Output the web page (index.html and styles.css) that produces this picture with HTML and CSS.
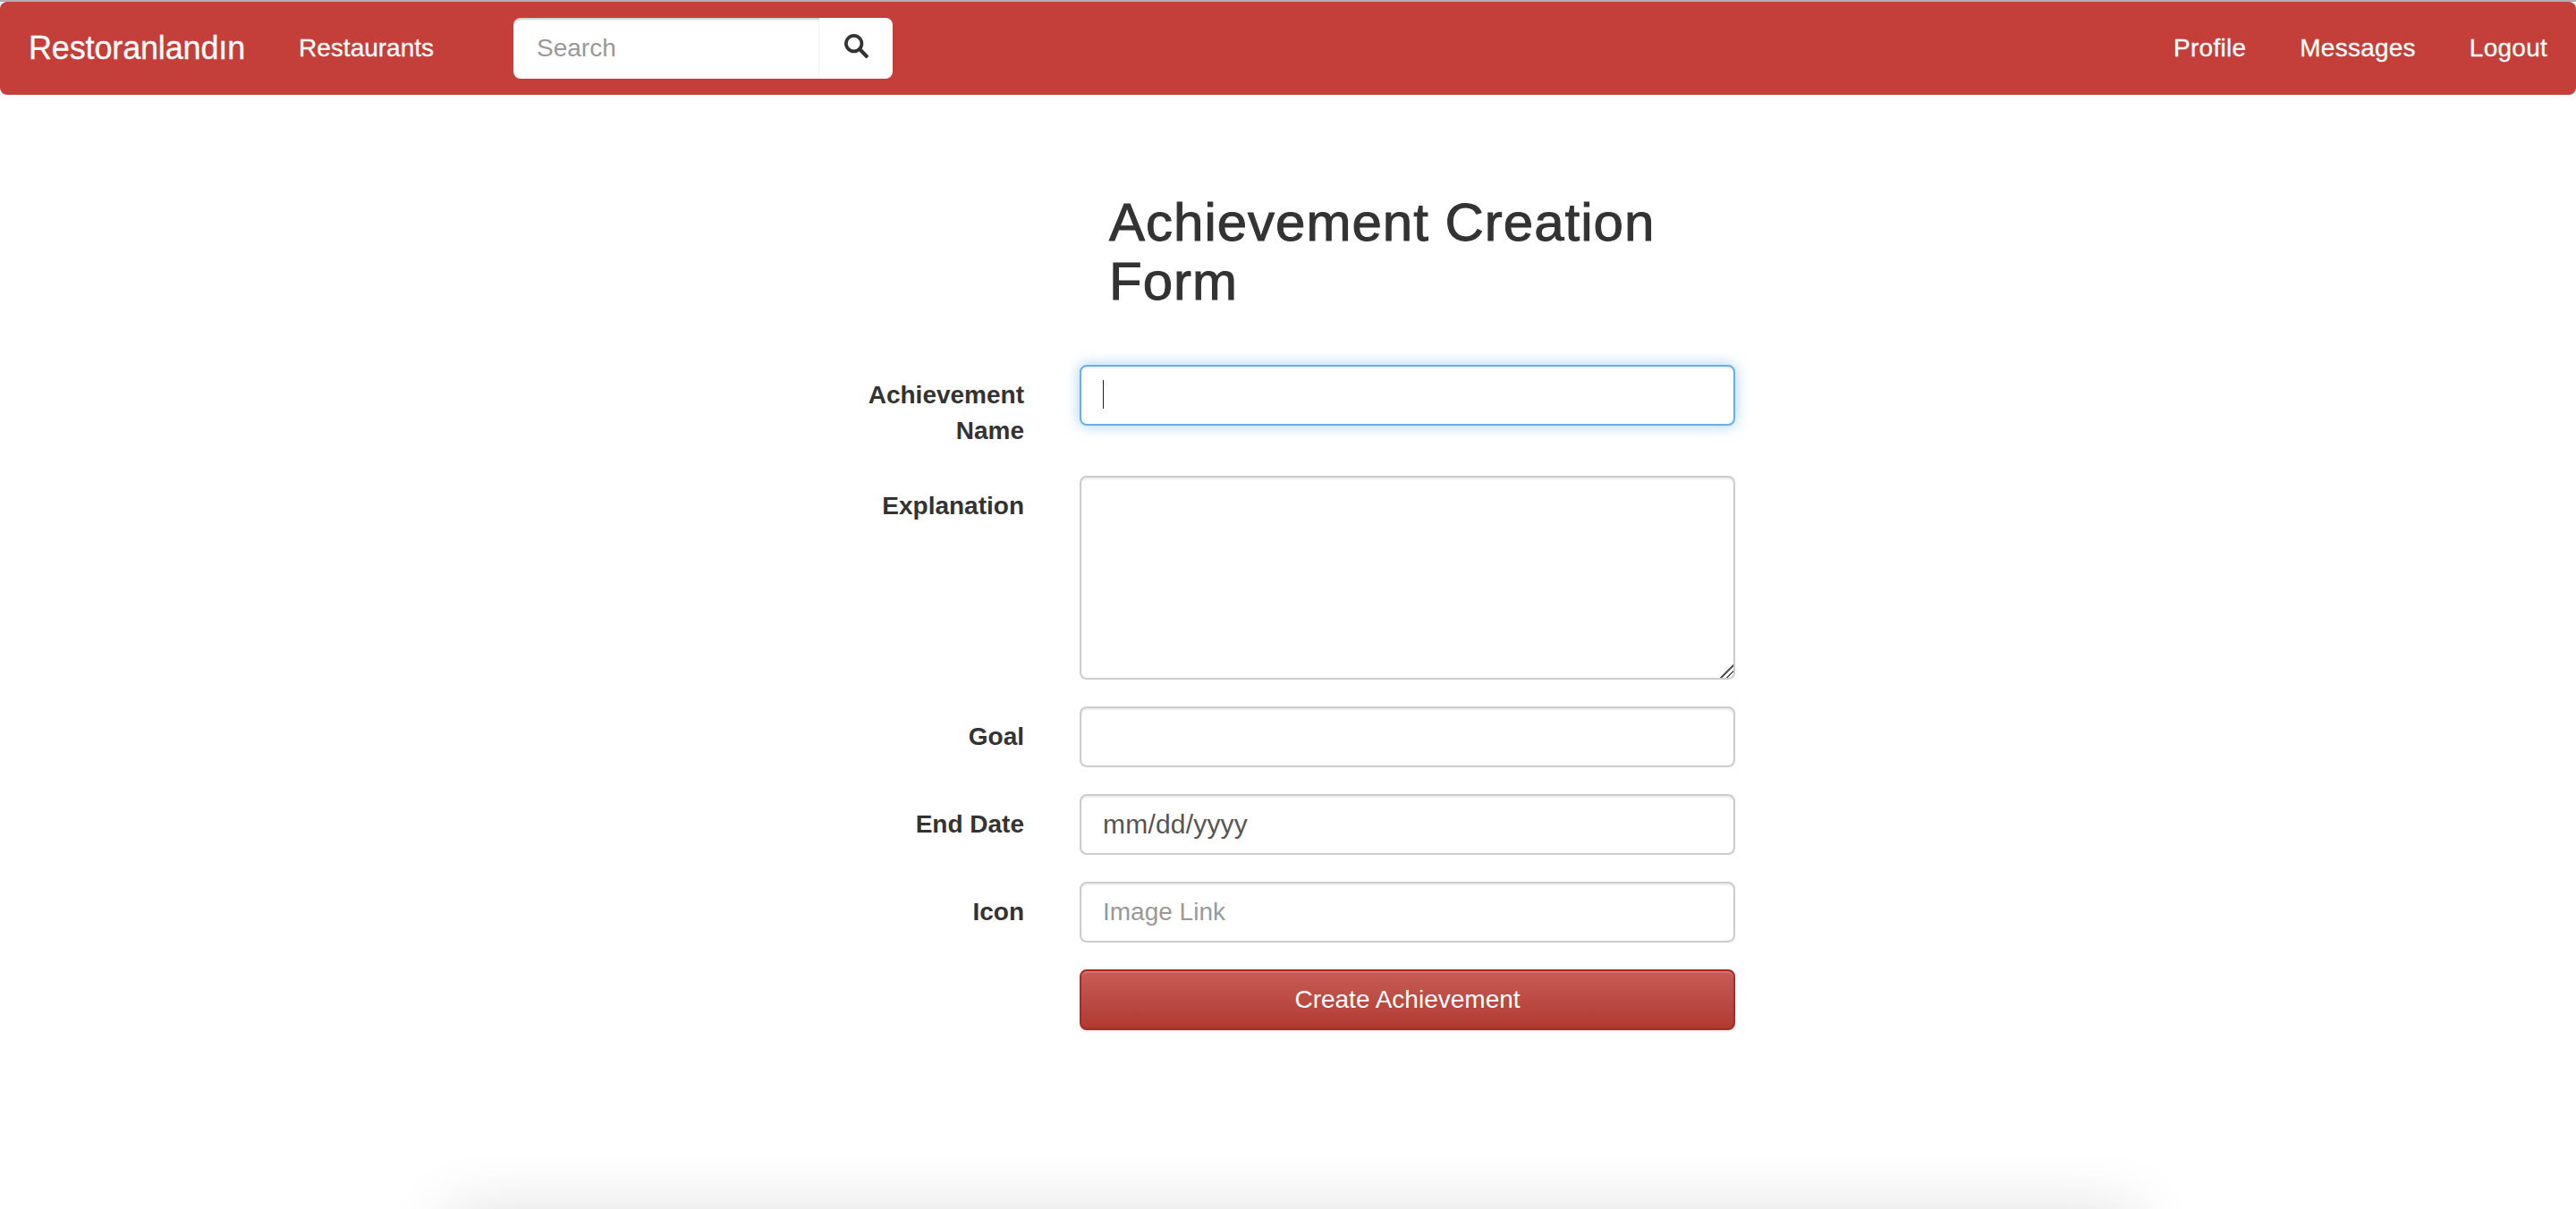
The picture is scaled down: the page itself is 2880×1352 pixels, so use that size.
FILE: index.html
```html
<!DOCTYPE html>
<html lang="en">
<head>
    <meta charset="UTF-8">
    <title>Restoranlandın</title>
    <link rel="stylesheet" href="styles.css">
</head>
<body>

    <nav class="navbar">
        <a class="brand" href="#">Restoranlandın</a>
        <a class="nav-link" href="#">Restaurants</a>
        <form class="search">
            <input type="text" placeholder="Search">
            <button type="button" aria-label="Search">
                <svg viewBox="0 0 24 24" width="28" height="28">
                    <circle cx="10" cy="10" r="7.5" fill="none" stroke="#333" stroke-width="3.2"/>
                    <path d="M15.5 15.5 L22 22" fill="none" stroke="#333" stroke-width="3.6" stroke-linecap="round"/>
                </svg>
            </button>
        </form>
        <div class="nav-right">
            <a class="nav-link" href="#">Profile</a>
            <a class="nav-link" href="#">Messages</a>
            <a class="nav-link" href="#">Logout</a>
        </div>
    </nav>

    <main class="content">
        <h2>Achievement Creation Form</h2>

        <form class="achievement-form">
            <label for="name">Achievement Name</label>
            <div class="field">
                <input class="control focused" type="text" id="name">
                <span class="caret"></span>
            </div>

            <label for="explanation">Explanation</label>
            <textarea class="control text-area" id="explanation"></textarea>

            <label for="goal">Goal</label>
            <input class="control" type="text" id="goal">

            <label for="endDate">End Date</label>
            <input class="control date-input" type="text" id="endDate" value="mm/dd/yyyy">

            <label for="icon">Icon</label>
            <input class="control" type="text" id="icon" placeholder="Image Link">

            <span></span>
            <button class="submit" type="button">Create Achievement</button>
        </form>
    </main>

    <div class="bottom-panel"></div>

</body>
</html>
```

FILE: styles.css
```css
html, body {
    height: 1352px;
    overflow: hidden;
}
body {
    display: flex;
    flex-direction: column;
    box-sizing: border-box;
    font-family: "Liberation Sans", Arial, sans-serif;
    font-size: 28px;
    line-height: 40px;
    color: #333333;
    background-color: #ffffff;
    margin: 0;
    border-top: 2px solid #b0aeae;
}
a {
    text-decoration: none;
}
.navbar {
    display: flex;
    align-items: center;
    height: 104px;
    flex-shrink: 0;
    background-color: #c43e3a;
    border-radius: 8px;
}
.brand {
    color: #ffffff;
    font-size: 36px;
    letter-spacing: -0.15px;
    padding: 0 30px 0 32px;
    -webkit-text-stroke: 0.3px #ffffff;
}
.nav-link {
    color: #ffffff;
    padding: 0 30px;
    -webkit-text-stroke: 0.3px #ffffff;
}
.nav-right .nav-link {
    letter-spacing: 0.25px;
}
.nav-right .nav-link:last-child {
    padding-right: 32px;
}
.search {
    display: flex;
    margin-left: 59px;
}
.search input {
    width: 342px;
    height: 68px;
    box-sizing: border-box;
    padding: 12px 26px;
    font: inherit;
    color: #555555;
    border: none;
    border-radius: 8px 0 0 8px;
    box-shadow: inset 0 2px 2px rgba(0, 0, 0, 0.2);
}
.search button {
    display: flex;
    align-items: center;
    justify-content: center;
    width: 82px;
    height: 68px;
    padding: 0 0 6px;
    background-color: #ffffff;
    border: none;
    border-radius: 0 8px 8px 0;
}
.nav-right {
    display: flex;
    margin-left: auto;
}
.content {
    width: 1000px;
    margin-left: 939px;
}
h2 {
    font-size: 60px;
    font-weight: 500;
    line-height: 66px;
    letter-spacing: 1px;
    width: 680px;
    margin: 110px 0 60px 301px;
    -webkit-text-stroke: 1px #333333;
}
.achievement-form {
    display: grid;
    grid-template-columns: 206px 733px;
    column-gap: 62px;
    row-gap: 30px;
}
label {
    font-weight: bold;
    text-align: right;
    padding-top: 14px;
}
.field {
    position: relative;
}
.control {
    display: block;
    width: 100%;
    height: 68px;
    box-sizing: border-box;
    padding: 12px 24px;
    font: inherit;
    color: #555555;
    background-color: #ffffff;
    border: 2px solid #cccccc;
    border-radius: 8px;
    box-shadow: inset 0 2px 2px rgba(0, 0, 0, 0.075);
    outline: none;
}
.focused {
    border-color: #66afe9;
    box-shadow: inset 0 2px 2px rgba(0, 0, 0, 0.075), 0 0 16px rgba(102, 175, 233, 0.6);
}
.text-area {
    height: 228px;
}
.text-area::-webkit-resizer {
    background: linear-gradient(135deg, transparent 50%, #555555 50%, #555555 57%, transparent 57%, transparent 72%, #555555 72%, #555555 79%, transparent 79%);
}
.date-input {
    font-size: 30px;
    letter-spacing: 0.2px;
}
.caret {
    position: absolute;
    left: 26px;
    top: 17px;
    width: 1px;
    height: 32px;
    background-color: #222222;
}
::placeholder {
    color: #999999;
    opacity: 1;
}
.submit {
    height: 68px;
    font: inherit;
    color: #ffffff;
    background-image: linear-gradient(to bottom, #c85c57 0, #b03a32 100%);
    border: 2px solid #ac2925;
    border-radius: 8px;
    box-shadow: inset 0 2px 0 rgba(255, 255, 255, 0.15), 0 2px 2px rgba(0, 0, 0, 0.075);
}
/* only the top of this panel's shadow shows at the bottom of the window */
.bottom-panel {
    height: 0;
    flex-shrink: 0;
    margin: auto 590px 0 600px;
    box-shadow: 0 100px 70px 100px rgba(0, 0, 0, 0.12);
}
```
